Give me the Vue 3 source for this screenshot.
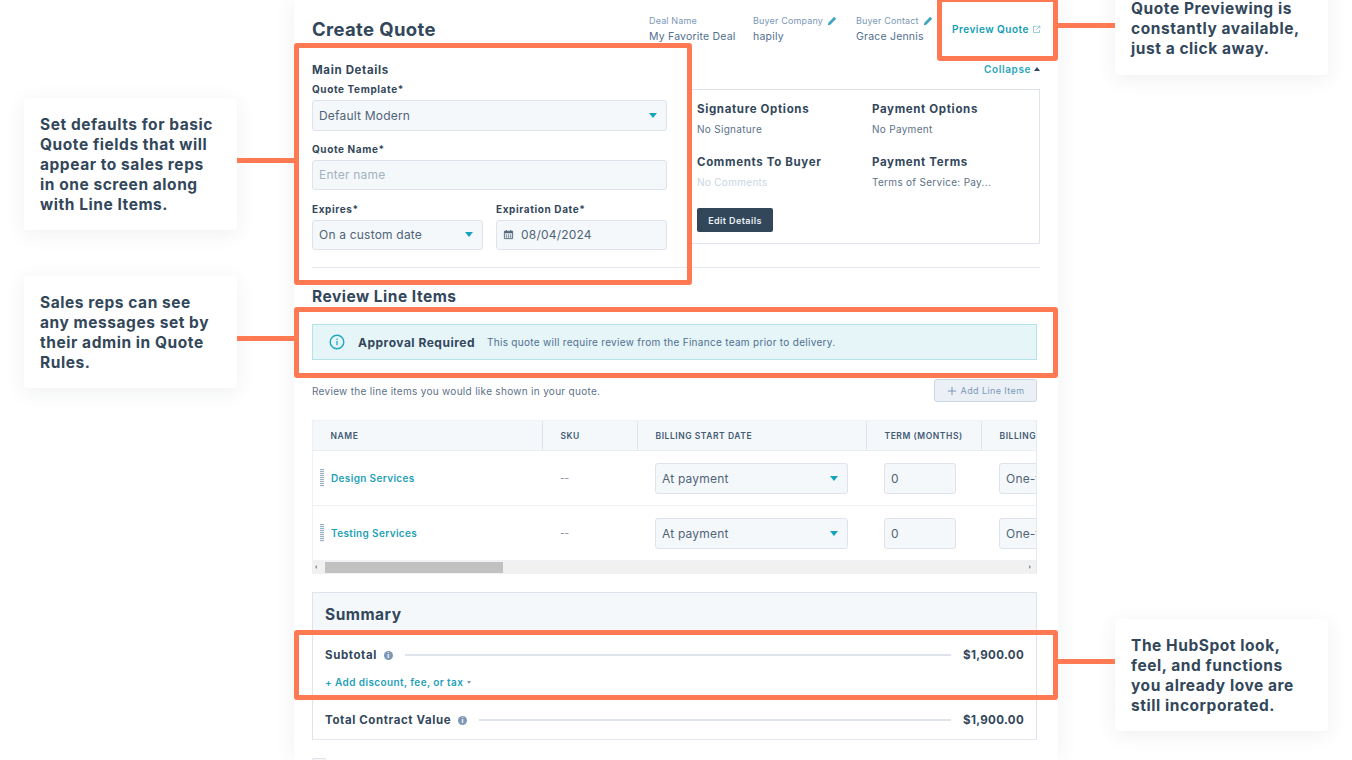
<template>
  <div class="page">
    <main class="panel">
      <header class="top">
        <h1>Create Quote</h1>
        <div class="metas">
          <div v-for="m in metas" :key="m.label" class="meta" :style="{ width: m.width + 'px' }">
            <div class="meta-label">
              {{ m.label }}
              <svg v-if="m.edit" class="pencil" viewBox="0 0 12 12"><path d="M8.6 1 11 3.4 4 10.4 1 11l.6-3z" fill="#3fa6bd" /></svg>
            </div>
            <div class="meta-value">{{ m.value }}</div>
          </div>
          <a class="preview">
            Preview Quote
            <svg viewBox="0 0 12 12" class="ext"><path d="M6 2H2v8h8V6.500M7 1.500h3.500V5M10.300 1.700 5.500 6.500" fill="none" stroke="#7fb9c9" stroke-width="1" /></svg>
          </a>
        </div>
      </header>

      <section class="details">
        <div class="form">
          <h3>Main Details</h3>
          <label class="first">Quote Template*</label>
          <div class="field select"><span>Default Modern</span><i class="caret"></i></div>
          <label>Quote Name*</label>
          <div class="field"><span class="placeholder">Enter name</span></div>
          <div class="pair">
            <div>
              <label>Expires*</label>
              <div class="field select"><span>On a custom date</span><i class="caret"></i></div>
            </div>
            <div>
              <label>Expiration Date*</label>
              <div class="field date">
                <svg viewBox="0 0 12 12" class="cal">
                  <path d="M1.500 2.500h9v8h-9z" fill="none" stroke="#51667a" stroke-width="1" />
                  <path d="M1.500 2.500h9v2h-9zM3 1h1.200v2H3zM7.800 1H9v2H7.800z" fill="#51667a" />
                  <path d="M3 6h1.500v1.200H3zM5.300 6h1.500v1.200H5.300zM7.600 6h1.500v1.200H7.600zM3 8h1.500v1.200H3zM5.300 8h1.500v1.200H5.300zM7.600 8h1.500v1.200H7.600z" fill="#51667a" />
                </svg>
                <span>08/04/2024</span>
              </div>
            </div>
          </div>
        </div>
        <div class="side">
          <a class="collapse">Collapse <i class="caret-up"></i></a>
          <div class="options">
            <div v-for="o in options" :key="o.title" class="option">
              <h4>{{ o.title }}</h4>
              <p :class="{ muted: o.muted }">{{ o.value }}</p>
            </div>
            <button class="edit">Edit Details</button>
          </div>
        </div>
      </section>

      <hr class="divider" />

      <h2>Review Line Items</h2>
      <div class="alert">
        <svg viewBox="0 0 16 16" class="alert-icon">
          <circle cx="8" cy="8" r="6.800" fill="none" stroke="#1fa7c0" stroke-width="1.400" />
          <path d="M8 7v4.200M8 4.500v1.300" stroke="#1fa7c0" stroke-width="1.300" />
        </svg>
        <strong>Approval Required</strong>
        <span>This quote will require review from the Finance team prior to delivery.</span>
      </div>

      <div class="intro">
        <p>Review the line items you would like shown in your quote.</p>
        <button class="add">
          <svg viewBox="0 0 12 12"><path d="M6 1v10M1 6h10" stroke="#7c98b6" stroke-width="1.200" /></svg>
          Add Line Item
        </button>
      </div>

      <div class="table">
        <div class="row head">
          <div v-for="c in columns" :key="c" class="cell">{{ c }}</div>
        </div>
        <div v-for="item in items" :key="item" class="row body">
          <div class="cell name"><i class="grip"></i><a>{{ item }}</a></div>
          <div class="cell sku">--</div>
          <div class="cell"><div class="field select small"><span>At payment</span><i class="caret"></i></div></div>
          <div class="cell"><div class="field term"><span>0</span></div></div>
          <div class="cell"><div class="field billing"><span>One-time</span></div></div>
        </div>
        <div class="scrollbar">
          <i class="arrow left"></i>
          <div class="thumb"></div>
          <i class="arrow right"></i>
        </div>
      </div>

      <section class="summary">
        <h2>Summary</h2>
        <div class="sum-row first-row">
          <b>Subtotal</b><i class="info">i</i><span class="rule"></span><b class="amount">$1,900.00</b>
        </div>
        <a class="discount">+ Add discount, fee, or tax <i class="caret-small"></i></a>
        <div class="sum-row total-row">
          <b>Total Contract Value</b><i class="info">i</i><span class="rule"></span><b class="amount">$1,900.00</b>
        </div>
      </section>
      <div class="checkbox"></div>
    </main>

    <!-- callouts and highlight frames sit over the screenshot -->
    <aside v-for="c in callouts" :key="c.text" class="callout" :class="c.cls">{{ c.text }}</aside>
    <div v-for="h in highlights" :key="h" class="frame" :class="h"></div>
    <div v-for="l in links" :key="l" class="link" :class="l"></div>
  </div>
</template>

<script setup>
const metas = [
  { label: 'Deal Name', value: 'My Favorite Deal', width: 104 },
  { label: 'Buyer Company', value: 'hapily', edit: true, width: 103 },
  { label: 'Buyer Contact', value: 'Grace Jennis', edit: true, width: 96 }
]

const options = [
  { title: 'Signature Options', value: 'No Signature' },
  { title: 'Payment Options', value: 'No Payment' },
  { title: 'Comments To Buyer', value: 'No Comments', muted: true },
  { title: 'Payment Terms', value: 'Terms of Service: Pay...' }
]

const columns = ['NAME', 'SKU', 'BILLING START DATE', 'TERM (MONTHS)', 'BILLING FREQUENCY']
const items = ['Design Services', 'Testing Services']

const callouts = [
  { cls: 'c1', text: 'Set defaults for basic Quote fields that will appear to sales reps in one screen along with Line Items.' },
  { cls: 'c2', text: 'Sales reps can see any messages set by their admin in Quote Rules.' },
  { cls: 'c3', text: 'Quote Previewing is constantly available, just a click away.' },
  { cls: 'c4', text: 'The HubSpot look, feel, and functions you already love are still incorporated.' }
]

const highlights = ['f1', 'f2', 'f3', 'f4']
const links = ['l1', 'l2', 'l3', 'l4']
</script>

<style>
html, body {
  margin: 0;
  height: 760px;
  overflow: hidden;
  background: #fff;
}
</style>

<style scoped>
.page {
  position: relative;
  width: 1352px;
  height: 760px;
  overflow: hidden;
  font-family: Inter, Lato, sans-serif;
  color: #33475b;
}
.panel {
  box-sizing: border-box;
  width: 764px;
  height: 760px;
  margin-left: 294px;
  padding: 0 18px;
  background: #fff;
  box-shadow: 0 0 20px rgba(45, 62, 80, 0.08);
  overflow: hidden;
}
h1, h2, h3, h4, p { margin: 0; }

/* header */
.top {
  display: flex;
  justify-content: space-between;
  height: 58px;
}
h1 {
  margin-top: 17px;
  font-size: 18.500px;
  line-height: 24px;
  letter-spacing: 0.35px;
}
.metas {
  display: flex;
  padding-top: 14px;
}
.meta-label {
  display: flex;
  align-items: center;
  gap: 4px;
  height: 13px;
  font-size: 9px;
  letter-spacing: 0.15px;
  color: #7c98b6;
}
.pencil { width: 10px; height: 10px; }
.meta-value {
  margin-top: 3px;
  font-size: 10.500px;
  line-height: 14px;
  letter-spacing: 0.2px;
  color: #516f90;
}
.preview {
  display: flex;
  align-items: center;
  gap: 3px;
  align-self: flex-start;
  width: 88px;
  margin-top: 7px;
  height: 16px;
  font-size: 10px;
  font-weight: 600;
  letter-spacing: 0.5px;
  color: #0f9cb5;
  white-space: nowrap;
}
.ext { width: 9px; height: 9px; flex: none; }

/* details */
.details {
  display: flex;
  gap: 20px;
}
.form {
  width: 355px;
  flex: none;
}
h3 {
  margin-top: 5px;
  font-size: 11.500px;
  font-weight: 700;
  line-height: 14px;
  letter-spacing: 0.65px;
}
label {
  display: block;
  margin-top: 11px;
  margin-bottom: 4px;
  font-size: 10px;
  font-weight: 700;
  line-height: 14px;
  letter-spacing: 0.6px;
}
label.first { margin-top: 5px; }
.field {
  box-sizing: border-box;
  display: flex;
  align-items: center;
  justify-content: space-between;
  height: 30.500px;
  padding: 0 7px 0 6px;
  background: #f5f8fa;
  border: 1px solid #dfe3eb;
  border-radius: 3px;
  font-size: 12px;
  letter-spacing: 0.2px;
  color: #4f6478;
}
.placeholder { color: #a3b3c2; }
.caret {
  display: block;
  width: 0;
  height: 0;
  margin-right: 2px;
  border: 4px solid transparent;
  border-top: 5px solid #12a4bd;
  border-bottom: 0;
}
.pair {
  display: grid;
  grid-template-columns: 171px 171px;
  gap: 13px;
  margin-top: 11.500px;
}
.pair label { margin-top: 0; }
.date {
  justify-content: flex-start;
  gap: 7px;
}
.cal { width: 11px; height: 11px; }
.side {
  flex: 1;
  padding-top: 4px;
}
.collapse {
  display: flex;
  justify-content: flex-end;
  align-items: center;
  gap: 3px;
  height: 14px;
  font-size: 10px;
  font-weight: 600;
  letter-spacing: 0.6px;
  color: #2aa5bc;
}
.caret-up {
  width: 0;
  height: 0;
  border: 3.500px solid transparent;
  border-bottom: 4px solid #33475b;
  border-top: 0;
}
.options {
  box-sizing: border-box;
  display: grid;
  grid-template-columns: 175px 1fr;
  grid-auto-rows: 53px;
  height: 155px;
  margin-top: 13px;
  padding: 11px 9px 0;
  border: 1px solid #dfe3eb;
}
h4 {
  font-size: 11.500px;
  font-weight: 700;
  line-height: 16px;
  letter-spacing: 0.65px;
}
.option p {
  margin-top: 5px;
  font-size: 10px;
  line-height: 14px;
  letter-spacing: 0.3px;
  color: #5c7187;
}
.option p.muted { color: #c9d6e3; }
.edit {
  width: 76px;
  height: 24px;
  margin-top: 1px;
  padding: 0;
  background: #33475b;
  color: #eaf0f6;
  border: 0;
  border-radius: 2px;
  font: 600 9px Inter, sans-serif;
  letter-spacing: 0.4px;
}
.divider {
  width: 728px;
  height: 0;
  margin: 17px 0 0;
  border: 0;
  border-top: 1px solid #e5eaf0;
}
h2 {
  margin-top: 20px;
  font-size: 15.500px;
  font-weight: 700;
  line-height: 18px;
  letter-spacing: 0.5px;
}

/* alert */
.alert {
  box-sizing: border-box;
  display: flex;
  align-items: center;
  width: 725px;
  height: 36px;
  margin-top: 18px;
  padding-left: 16px;
  background: #e5f5f8;
  border: 1px solid #b5e3ec;
}
.alert-icon { width: 16px; height: 16px; }
.alert strong {
  margin-left: 13px;
  font-size: 12px;
  letter-spacing: 0.5px;
}
.alert span {
  margin-left: 12px;
  font-size: 10px;
  letter-spacing: 0.3px;
  color: #516f90;
}
.intro {
  display: flex;
  justify-content: space-between;
  align-items: center;
  width: 725px;
  height: 23px;
  margin-top: 19px;
  font-size: 10px;
  letter-spacing: 0.3px;
  color: #5c7187;
}
.add {
  display: flex;
  align-items: center;
  justify-content: center;
  gap: 4px;
  width: 103px;
  height: 23px;
  padding: 0;
  background: #eaf0f6;
  border: 1px solid #cbd6e2;
  border-radius: 3px;
  color: #7c98b6;
  font: 400 9px Inter, sans-serif;
  letter-spacing: 0.4px;
}
.add svg { width: 10px; height: 10px; }

/* table */
.table {
  width: 725px;
  margin-top: 18px;
  overflow: hidden;
  border-left: 1px solid #eef2f6;
  box-sizing: border-box;
  border-right: 1px solid #e5eaf0;
}
.row {
  display: grid;
  grid-template-columns: 230px 95px 229px 115px 200px;
  width: 800px;
}
.head {
  height: 31px;
  background: #f5f8fa;
  border-bottom: 1px solid #e9eef3;
  border-top: 1px solid #eef2f6;
  box-sizing: border-box;
  font-size: 8.500px;
  font-weight: 600;
  letter-spacing: 0.55px;
  color: #425b76;
}
.head .cell {
  display: flex;
  align-items: center;
  padding-left: 17.500px;
  border-right: 1px solid #dfe3eb;
  white-space: nowrap;
}
.body {
  height: 55px;
  border-bottom: 1px solid #eef2f6;
  box-sizing: border-box;
}
.body .cell {
  display: flex;
  align-items: center;
  padding-left: 17px;
  font-size: 10px;
}
.body .cell.name { padding-left: 7px; gap: 7px; }
.body .field { height: 31px; font-size: 12px; }
.name a {
  font-weight: 600;
  letter-spacing: 0.35px;
  color: #1f9fb8;
}
.grip {
  display: block;
  width: 4px;
  height: 18px;
  background: repeating-linear-gradient(#9fb0c2 0 1px, #eef2f6 1px 2px);
}
.body .sku { color: #7b8a99; }
.small { width: 193px; }
.term { width: 72px; }
.billing { width: 100px; white-space: nowrap; }
.scrollbar {
  position: relative;
  height: 13px;
  background: #f1f1f1;
}
.thumb {
  position: absolute;
  left: 12px;
  top: 1px;
  width: 178px;
  height: 11px;
  background: #c1c1c1;
}
.arrow {
  position: absolute;
  top: 4px;
  width: 0;
  height: 0;
  border: 2.500px solid transparent;
}
.arrow.left { left: 2px; border-right-color: #8f8f8f; border-left: 0; }
.arrow.right { right: 5px; border-left-color: #8f8f8f; border-right: 0; }

/* summary */
.summary {
  box-sizing: border-box;
  width: 725px;
  height: 148px;
  margin-top: 18px;
  border: 1px solid #dfe3eb;
  border-bottom-color: #e5eaf0;
}
.summary h2 {
  height: 39px;
  margin: 0;
  padding: 13px 12px 0;
  box-sizing: border-box;
  background: #f5f8fa;
  font-size: 15.500px;
  line-height: 18px;
}
.sum-row {
  display: flex;
  align-items: center;
  gap: 7px;
  height: 16px;
  padding: 0 12px;
  font-size: 11.500px;
  letter-spacing: 0.6px;
}
.amount { letter-spacing: 0.35px; }
.first-row { margin-top: 15px; }
.total-row { margin-top: 23px; }
.info {
  flex: none;
  width: 9px;
  height: 9px;
  border-radius: 50%;
  background: #7c98b6;
  color: #fff;
  font: 700 7px/9px Inter, sans-serif;
  text-align: center;
}
.rule {
  flex: 1;
  height: 2px;
  margin-left: 5px;
  margin-right: 5px;
  background: #dfe3eb;
}
.discount {
  display: flex;
  align-items: center;
  gap: 4px;
  height: 14px;
  margin-top: 12px;
  padding-left: 12px;
  font-size: 10px;
  font-weight: 600;
  letter-spacing: 0.4px;
  color: #1f9fb8;
}
.caret-small {
  width: 0;
  height: 0;
  border: 2.500px solid transparent;
  border-top: 3px solid #7c98b6;
  border-bottom: 0;
}
.checkbox {
  width: 14px;
  height: 14px;
  margin-top: 18px;
  background: #f5f8fa;
  border: 1px solid #dfe3eb;
  border-radius: 2px;
  box-sizing: border-box;
}

/* callouts */
.callout {
  position: absolute;
  box-sizing: border-box;
  width: 213px;
  padding: 17px 16px 16px;
  background: #fff;
  border-radius: 3px;
  box-shadow: 0 4px 20px rgba(45, 62, 80, 0.08);
  font-size: 15.500px;
  font-weight: 700;
  line-height: 20px;
  letter-spacing: 0.55px;
  color: #33475b;
}
.c1 { left: 24px; top: 98px; height: 132px; }
.c2 { left: 24px; top: 276px; height: 112px; }
.c3 { left: 1115px; top: -27px; height: 102px; padding-top: 26px; }
.c4 { left: 1115px; top: 619px; height: 112px; }

.frame {
  position: absolute;
  box-sizing: border-box;
  border: 5.500px solid #ff7a53;
  border-radius: 3px;
}
.f1 { left: 294px; top: 43px; width: 398px; height: 242px; }
.f2 { left: 937px; top: -3px; width: 121px; height: 64px; }
.f3 { left: 294px; top: 307px; width: 764px; height: 71px; }
.f4 { left: 294px; top: 630px; width: 764px; height: 70px; }

.link {
  position: absolute;
  width: 57px;
  height: 5px;
  background: #ff7a53;
}
.l1 { left: 237px; top: 158px; }
.l2 { left: 237px; top: 336px; }
.l3 { left: 1058px; top: 23px; }
.l4 { left: 1058px; top: 659px; }
</style>
